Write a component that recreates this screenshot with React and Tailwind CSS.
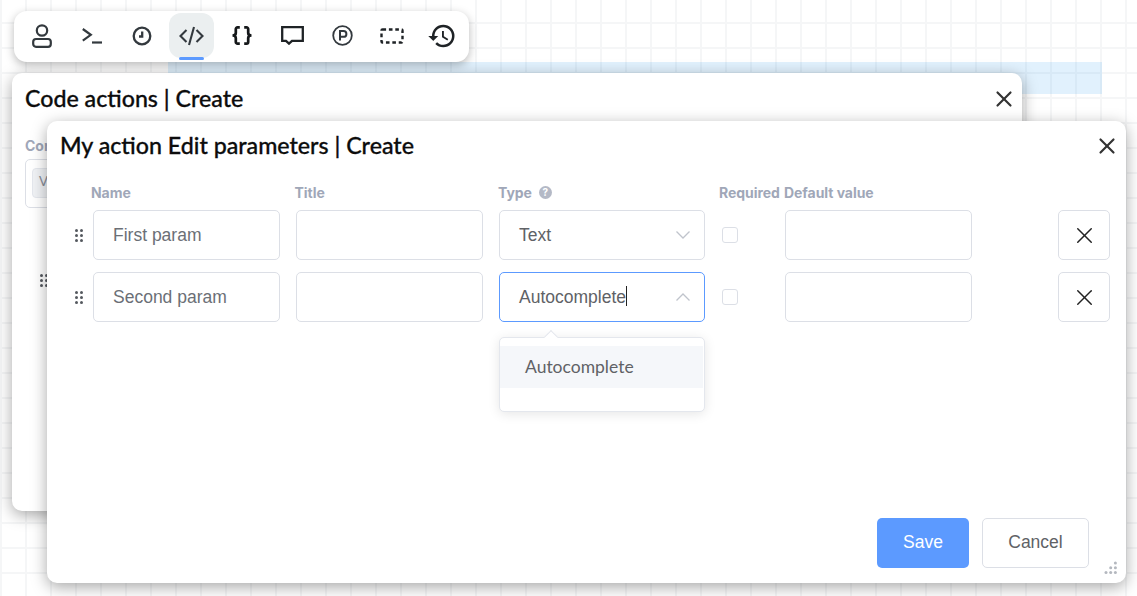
import React from "react";
import { MdHistory } from "react-icons/md";
import { X } from "lucide-react";

const Grip = ({ className = "" }) => (
  <svg width="8" height="13" viewBox="0 0 8 13" className={className} fill="currentColor">
    {[1.5, 6.5, 11.5].map((y) => (
      <g key={y}>
        <circle cx="1.500" cy={y} r="1.500" />
        <circle cx="6.500" cy={y} r="1.500" />
      </g>
    ))}
  </svg>
);

const I = ({ children, active }) => (
  <div className={`relative w-[45px] h-[45px] flex items-center justify-center rounded-xl text-[#33393e] ${active ? "bg-[#ebeff0] ml-[1.5px] mr-[3.5px]" : "mx-[2.5px]"}`}>
    {children}
    {active && <div className="absolute left-[10px] bottom-[-2px] w-[25px] h-[3px] rounded-sm bg-[#5c9aff]" />}
  </div>
);

const Toolbar = () => (
  <div className="absolute left-[14px] top-[11px] w-[455px] h-[51px] bg-white rounded-[13px] shadow-[0_3px_10px_rgba(0,0,0,0.28)] flex items-start pt-[2px] pl-[3px] z-30">
    <I>
      <svg width="20" height="24" viewBox="0 0 20 24" fill="none" stroke="currentColor" strokeWidth="2.2">
        <circle cx="10" cy="6.500" r="5.200" />
        <rect x="1.200" y="15" width="17.600" height="7.800" rx="2.800" />
      </svg>
    </I>
    <I>
      <svg width="20" height="16" viewBox="0 0 20 16" fill="none" stroke="currentColor" strokeWidth="2.2">
        <path d="M0.800 1l8 5.800-8 5.800" />
        <path d="M10 14.500h10" />
      </svg>
    </I>
    <I>
      <svg width="20" height="20" viewBox="0 0 20 20" fill="none" stroke="currentColor" strokeWidth="2.300">
        <circle cx="10" cy="10" r="8.300" />
        <path d="M10.200 5.500V10.500H7" />
      </svg>
    </I>
    <I active>
      <svg width="25" height="20" viewBox="0 0 25 20" fill="none" stroke="currentColor" strokeWidth="2.100">
        <path d="M7.500 4l-6 6 6 6" />
        <path d="M17.500 4l6 6-6 6" />
        <path d="M15 1l-5 18" />
      </svg>
    </I>
    <I>
      <svg width="22" height="19" viewBox="0 0 22 19" fill="none" stroke="#15181a" strokeWidth="2.700">
        <path d="M8.800 1.400H6.500a1.700 1.700 0 0 0-1.700 1.700V7c0 1.500-1.200 2.500-3.300 2.500 2.100 0 3.300 1 3.300 2.500v3.900a1.700 1.700 0 0 0 1.700 1.700h2.300" />
        <path d="M13.200 1.400h2.300a1.700 1.700 0 0 1 1.700 1.700V7c0 1.500 1.200 2.500 3.300 2.500-2.100 0-3.300 1-3.300 2.500v3.900a1.700 1.700 0 0 1-1.700 1.700h-2.300" />
      </svg>
    </I>
    <I>
      <svg width="23" height="19" viewBox="0 0 23 19" fill="none" stroke="#1f2326" strokeWidth="2.300">
        <path d="M1.200 1.200h20.600v13.600H11l-3 2.800-3-2.800H1.200z" />
      </svg>
    </I>
    <I>
      <svg width="21" height="21" viewBox="0 0 21 21" fill="none" stroke="currentColor" strokeWidth="1.800">
        <circle cx="10.500" cy="10.500" r="9.300" />
        <path d="M8 15.500V6h3.500a2.900 2.900 0 0 1 0 5.800H8" strokeWidth="2" />
      </svg>
    </I>
    <I>
      <svg width="24" height="16" viewBox="0 0 24 16" fill="none" stroke="#1f2326" strokeWidth="2.400" strokeDasharray="3.600 2.800">
        <rect x="1.500" y="1.500" width="21" height="13" rx="1" />
      </svg>
    </I>
    <I>
      <MdHistory size={30} color="#1f2326" />
    </I>
  </div>
);

const inputCls = "h-[50px] w-[187px] shrink-0 border border-[#dcdfe6] rounded-[5px] bg-white flex items-center";

const Field = ({ v }) => (
  <div className={`${inputCls} pl-[19px] text-[17.5px] text-[#6b6f76] font-['Liberation_Sans',sans-serif]`}>{v}</div>
);

const Row = ({ name, type, open }) => (
  <div className="flex items-center h-[50px] mb-[12px]">
    <Grip className="ml-[28px] mr-[10px] text-[#55595f]" />
    <Field v={name} />
    <div className={`${inputCls} ml-[16px]`} />
    <div className={`relative h-[50px] w-[206px] ml-[16px] shrink-0 rounded-[5px] border ${open ? "border-[#5c9aff]" : "border-[#dcdfe6]"} flex items-center justify-between pl-[19px] pr-[14px] text-[17.5px] text-[#606266] font-['Liberation_Sans',sans-serif]`}>
      <span className="relative">
        {type}
        {open && <span className="absolute right-[-1px] top-[2px] w-px h-[20px] bg-[#222]" />}
      </span>
      <svg width="14" height="8" viewBox="0 0 14 8" fill="none" stroke="#c0c4cc" strokeWidth="1.300">
        <path d={open ? "M0.500 7.500L7 1l6.500 6.500" : "M0.500 0.500L7 7l6.500-6.500"} />
      </svg>
      {open && (
        <div className="absolute left-[-1px] top-[64px] w-[206px] h-[75px] bg-white border border-[#e4e7ed] rounded-[5px] shadow-[0_2px_12px_rgba(0,0,0,0.1)] pt-[8px] z-10">
          <div className="absolute left-[46px] top-[-6px] w-[10px] h-[10px] bg-white border-l border-t border-[#e4e7ed] rotate-45" />
          <div className="relative h-[42px] bg-[#f5f7fa] flex items-center pl-[25px] mr-[1px] text-[17.5px] text-[#606266] font-['Lato',sans-serif]">
            Autocomplete
          </div>
        </div>
      )}
    </div>
    <div className="w-[16px] h-[16px] ml-[17px] shrink-0 rounded-[3px] border border-[#dcdfe6] bg-white" />
    <div className={`${inputCls} ml-[47px]`} />
    <div className="w-[52px] h-[50px] ml-[86px] shrink-0 border border-[#dcdfe6] rounded-[5px] flex items-center justify-center text-[#222]">
      <X size={27} strokeWidth={1.3} />
    </div>
  </div>
);

const Label = ({ w, children }) => (
  <div className={`${w} shrink-0 flex items-center text-[14px] font-bold tracking-[-0.05px] text-[#a0a7b8] font-['Inter',sans-serif] whitespace-nowrap`}>{children}</div>
);

export default function App() {
  return (
    <div className="relative w-[1137px] h-[596px] overflow-hidden bg-white bg-[linear-gradient(to_right,#f5f6f7_2px,transparent_2px),linear-gradient(to_bottom,#f5f6f7_2px,transparent_2px)] bg-[size:25px_25px] bg-[position:0px_-3px]">
      <div className="absolute left-[168px] top-[62px] w-[934px] h-[32px] bg-[#2d9cee]/[0.14]" />
      <Toolbar />

      <div className="absolute left-[12px] top-[73px] w-[1010px] h-[438px] bg-white rounded-[10px] shadow-[0_4px_16px_rgba(0,0,0,0.35)] z-10 pl-[13px] pt-[10px]">
        <div className="flex justify-between items-center pr-[5px] text-[23.2px] leading-[30px] text-[#0c0c0c] [-webkit-text-stroke:0.3px_#0c0c0c] font-['Lato',sans-serif] font-medium">
          <span>Code actions | Create</span>
          <X size={26} strokeWidth={2} className="text-[#333] translate-y-[1px]" />
        </div>
        <div className="mt-[22px] text-[14px] font-bold text-[#a0a7b8] font-['Inter',sans-serif]">Cont</div>
        <div className="mt-[3px] w-[400px] h-[49px] border border-[#dcdfe6] rounded-[5px] pl-[6px] pt-[8px]">
          <div className="w-[100px] h-[30px] bg-[#f0f2f5] border border-[#e4e7ed] rounded-[4px] pl-[6px] text-[#8a8f99] text-[15px]">V</div>
        </div>
        <Grip className="ml-[15px] mt-[66px] text-[#55595f]" />
      </div>

      <div className="absolute left-[47px] top-[121px] w-[1079px] h-[462px] bg-white rounded-[10px] shadow-[0_4px_16px_rgba(0,0,0,0.35)] z-20 pt-[9px]">
        <div className="flex justify-between items-center pl-[13px] pr-[6px] text-[23.2px] leading-[30px] text-[#0c0c0c] [-webkit-text-stroke:0.3px_#0c0c0c] font-['Lato',sans-serif] font-medium">
          <span>My action Edit parameters | Create</span>
          <X size={26} strokeWidth={2} className="text-[#333] translate-y-[1px]" />
        </div>
        <div className="flex h-[20px] mt-[22px] mb-[8px] pl-[44px]">
          <Label w="w-[203.5px]">Name</Label>
          <Label w="w-[203.5px]">Title</Label>
          <Label w="w-[221px]">
            Type
            <span className="ml-[7px] w-[13px] h-[13px] rounded-full bg-[#b4b9c6] text-white text-[10px] font-bold flex items-center justify-center">?</span>
          </Label>
          <Label w="w-[65px]">Required</Label>
          <Label w="w-[120px]">Default value</Label>
        </div>
        <Row name="First param" type="Text" />
        <Row name="Second param" type="Autocomplete" open />
        <div className="absolute left-[830px] top-[397px] flex gap-[13px] text-[17.5px] font-['Liberation_Sans',sans-serif]">
          <div className="w-[92px] h-[50px] pb-[2px] bg-[#5c9aff] rounded-[5px] text-white flex items-center justify-center">Save</div>
          <div className="w-[107px] h-[50px] pb-[2px] border border-[#dcdfe6] rounded-[5px] text-[#606266] flex items-center justify-center">Cancel</div>
        </div>
        <svg width="14" height="14" viewBox="0 0 14 14" fill="#b4b8bf" className="absolute right-[8px] bottom-[8px]">
          {[[11.4, 2], [6.700, 6.700], [11.4, 6.700], [2, 11.4], [6.700, 11.4], [11.4, 11.4]].map(([x, y]) => (
            <circle key={`${x}-${y}`} cx={x} cy={y} r="1.500" />
          ))}
        </svg>
      </div>
    </div>
  );
}
